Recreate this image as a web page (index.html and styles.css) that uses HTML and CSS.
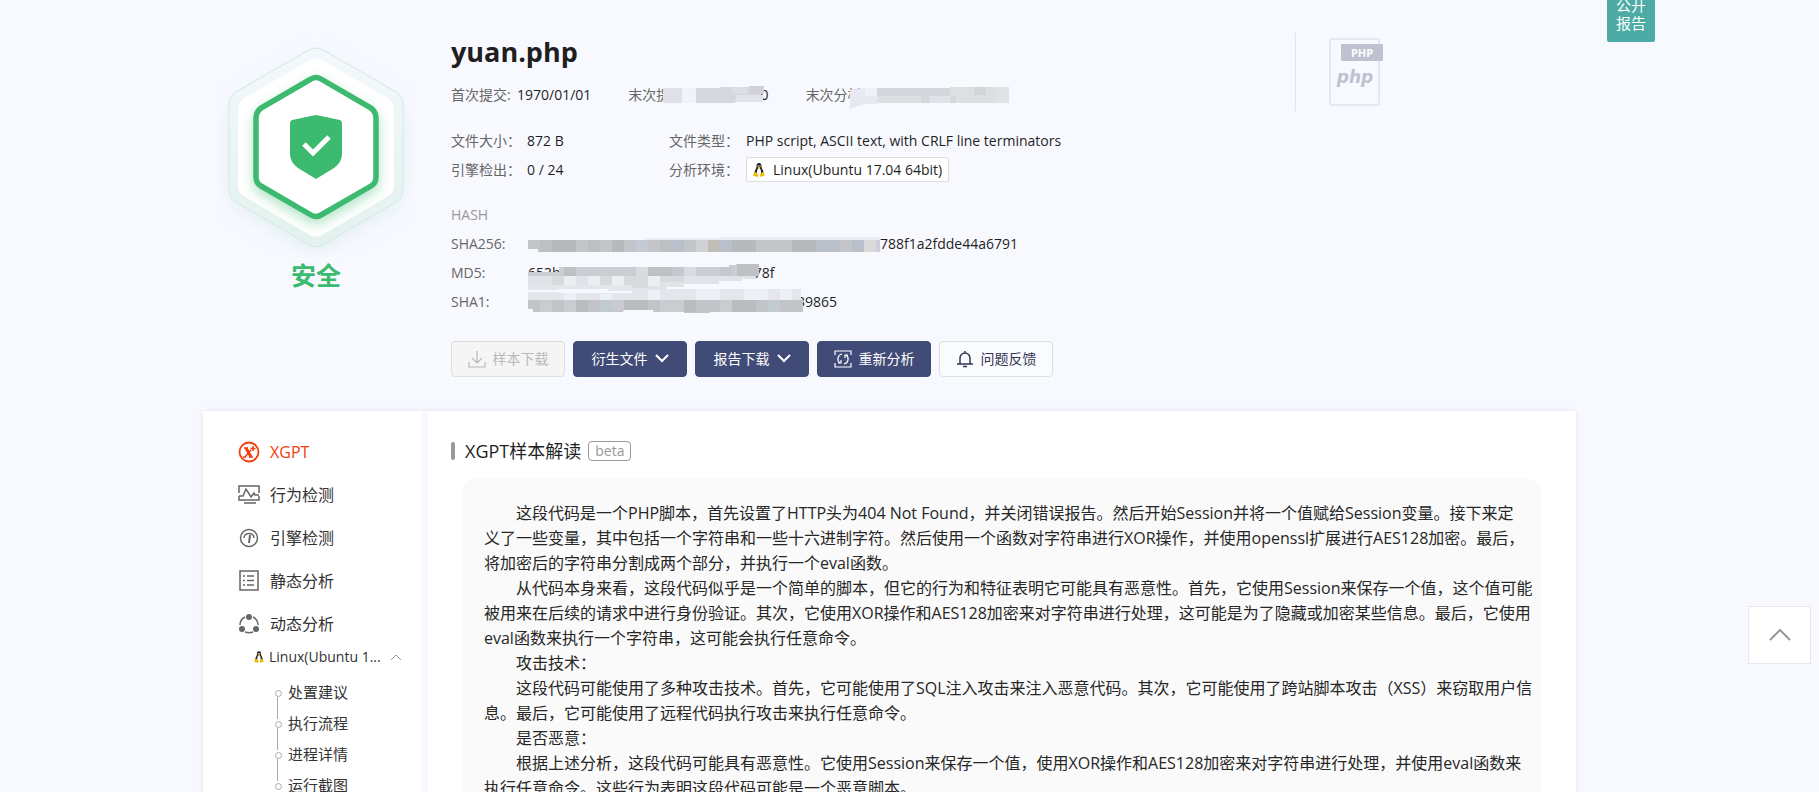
FILE: index.html
```
<!DOCTYPE html>
<html lang="zh-CN">
<head>
    <meta charset="UTF-8">
    <meta name="viewport" content="width=device-width, initial-scale=1.0">
    <title>yuan.php</title>
    <link rel="stylesheet" href="styles.css">
</head>
<body>

    <svg width="0" height="0" class="defs" aria-hidden="true">
        <symbol id="tux" viewBox="0 0 24 28">
            <path fill="#1c1c1c" d="M12 0c-4 0-5 3-5 6 0 4-1 5-3 9-1 3-1 6 0 8h16c1-2 1-5 0-8-2-4-3-5-3-9 0-3-1-6-5-6z"/>
            <path fill="#fff" d="M12 10c-3 0-3 3-4 6-1 4 0 9 4 9s5-5 4-9c-1-3-1-6-4-6z"/>
            <circle cx="10" cy="6" r="1.400" fill="#fff"/>
            <circle cx="14" cy="6" r="1.400" fill="#fff"/>
            <path fill="#f5b800" d="M9 9l3-2 3 2-3 3z"/>
            <path fill="#f5b800" d="M3 19l3-1 5 7c0 3-3 3-5 2l-5-1c-1-1 0-2 0-3 0-2 1-3 2-4zM21 19l-3-1-4 7c0 3 3 3 4 2l5-2c1-1 0-2-1-3 0-2-1-2-1-3z"/>
        </symbol>
    </svg>

    <div class="ribbon">公开<br>报告</div>

    <!-- File summary -->
    <header class="summary">
        <div class="verdict">
            <svg width="200" height="220" viewBox="0 0 200 220">
                <defs>
                    <linearGradient id="halo" x1="0" y1="0" x2="0" y2="1">
                        <stop offset="0" stop-color="#f4f8fd"/>
                        <stop offset="1" stop-color="#e3f2ee"/>
                    </linearGradient>
                    <filter id="outer" x="-30%" y="-30%" width="160%" height="160%">
                        <feDropShadow dx="0" dy="6" stdDeviation="9" flood-color="#9fcfcf" flood-opacity=".22"/>
                    </filter>
                    <filter id="glow" x="-30%" y="-30%" width="160%" height="160%">
                        <feDropShadow dx="0" dy="5" stdDeviation="6" flood-color="#3cba70" flood-opacity=".4"/>
                    </filter>
                </defs>
                <path filter="url(#outer)" fill="url(#halo)" stroke="#cfeae0" d="M93 13q7-4 14 0l73 42q7 5 7 13v84q0 9-7 13l-73 43q-7 4-14 0l-73-43q-7-4-7-13V68q0-8 7-13z"/>
                <path fill="#fff" d="M94 23q6-3 12 0l65 38q7 4 7 11v77q0 7-7 11l-65 38q-6 3-12 0l-65-38q-7-4-7-11V72q0-7 7-11z"/>
                <path filter="url(#glow)" fill="#fff" stroke="#3cba70" stroke-width="5.500" d="M95 42q5-3 10 0l50 29q5 4 5 10v59q0 6-5 9l-50 29q-5 3-10 0l-50-29q-5-3-5-9V81q0-6 5-10z"/>
                <path fill="#3cba70" d="M100 78l24 5q2 1 2 3v31q0 8-8 14l-18 11-18-11q-8-6-8-14V86q0-2 2-3z"/>
                <path fill="none" stroke="#fff" stroke-width="5" d="M88 107l9 9 16-16"/>
            </svg>
            <strong>安全</strong>
        </div>

        <div class="info">
            <h1>yuan.php</h1>

            <div class="dates">
                <div class="date"><span class="label">首次提交:</span><span>1970/01/01</span></div>
                <div class="date">
                    <span class="label">末次提交:</span><span>0000/00/00</span>
                    <svg class="mask" width="141" height="20">
                        <path fill="#e0e1e6" d="M35 3h33v15H35z"/>
                        <path fill="#f2f3fa" d="M54 3h15v15H54z"/>
                        <path fill="#d6d8dd" d="M68 3h24V2h41v15h-26v1H68z"/>
                        <path fill="#dadfe7" d="M104 2h15v7h-15z"/>
                        <path fill="#e1e3e9" d="M108 10h27v7h-27z"/>
                        <path fill="#cfd1d6" d="M121 1h15v8h-15z"/>
                    </svg>
                </div>
                <div class="date">
                    <span class="label">末次分析:</span><span>0000/00/00</span>
                    <svg class="mask" width="205" height="24">
                        <path fill="#e6e9f2" d="M44 5l14-2h14v16H58l-14 5z"/>
                        <path fill="#f0f1f8" d="M59 3h12v8H59z"/>
                        <path fill="#d4d7db" d="M71 3h132v15H71z"/>
                        <path fill="#dddfe3" d="M71 11h44v7H71zM144 2h46v9h-46zM150 11h53v7h-53z"/>
                        <path fill="#e1e2e7" d="M190 2h13v16h-13zM124 11h20v7h-20z"/>
                        <path fill="#d0d5d9" d="M168 2h12v8h-12z"/>
                    </svg>
                </div>
            </div>

            <div class="meta">
                <span class="label">文件大小：</span><span>872 B</span>
                <span class="label">文件类型：</span><span>PHP script, ASCII text, with CRLF line terminators</span>
                <span class="label">引擎检出：</span><span>0 / 24</span>
                <span class="label">分析环境：</span><span class="env"><svg width="12" height="14"><use href="#tux"/></svg>Linux(Ubuntu 17.04 64bit)</span>
            </div>

            <div class="hashes">
                <div class="hash-title">HASH</div>
                <div class="hash"><span class="label">SHA256:</span><span class="hidden-part long">cc</span><span>788f1a2fdde44a6791</span></div>
                <div class="hash"><span class="label">MD5:</span><span class="hidden-part short">653b</span><span>c78f</span></div>
                <div class="hash"><span class="label">SHA1:</span><span class="hidden-part medium"></span><span>39865</span></div>
                <svg class="hash-mask" width="353" height="78" shape-rendering="crispEdges">
                    <!-- SHA256 -->
                    <path fill="#ecedf3" d="M116 2h74V1h162v4H116z"/>
                    <path fill="#c4c5c9" d="M0 4h352v12H10v-3H0z"/>
                    <path fill="#b8b9bd" d="M24 4h24v12H24zM84 4h12v12H84zM204 4h24v12h-24zM264 4h24v12h-24z"/>
                    <path fill="#bebfc3" d="M12 4h12v12H12zM60 4h12v12H60zM132 4h12v12h-12z"/>
                    <path fill="#bac0c9" d="M144 4h12v12h-12zM192 4h12v12h-12zM288 4h24v12h-24zM324 4h12v12h-12z"/>
                    <path fill="#c5cbd4" d="M108 4h12v12h-12z"/>
                    <path fill="#cfd1d6" d="M168 4h12v12h-12z"/>
                    <path fill="#c0bdb8" d="M180 4h12v12h-12z"/>
                    <path fill="#dadad8" d="M336 4h12v12h-12z"/>
                    <path fill="#cdd0dc" d="M348 4h4v12h-4z"/>
                    <!-- MD5 -->
                    <path fill="#e2e3e8" d="M0 40h228v3h-14v2h-23v3h-35v3h-18v2H0z"/>
                    <path fill="#d9dade" d="M24 40h12v12H24zM72 40h12v12H72zM96 40h24v12H96zM132 40h24v6h-24z"/>
                    <path fill="#eceef4" d="M36 40h12v12H36zM60 40h12v12H60zM84 40h12v12H84zM120 40h12v10h-12z"/>
                    <path fill="#cccdd2" d="M0 36h31v-5h170v-2h7v-1h23v12H0z"/>
                    <path fill="#bfc0c4" d="M36 31h12v9H36zM120 31h24v9h-24zM209 28h22v12h-22z"/>
                    <path fill="#c4c9d1" d="M144 31h12v9h-12zM192 31h12v9h-12z"/>
                    <path fill="#dadbe0" d="M108 31h12v9h-12zM156 31h12v9h-12z"/>
                    <!-- SHA1 -->
                    <path fill="#e4e6eb" d="M0 49h104v3h20v1h149v11H0z"/>
                    <path fill="#f8f9ff" d="M0 54h30v-1h50v2h24v2H32v-1H0z"/>
                    <path fill="#edf0f6" d="M36 57h12v7H36zM72 58h12v6H72zM120 54h12v10h-12zM168 53h24v11h-24zM216 53h24v11h-24zM252 53h12v11h-12z"/>
                    <path fill="#c3c4c8" d="M0 64h275v12h-93v1h-26v-1h-31v-2h-30v2H5v-3H0z"/>
                    <path fill="#cbccd1" d="M12 64h12v12H12zM36 64h12v12H36zM84 64h12v11H84zM132 64h24v12h-24zM192 64h12v12h-12z"/>
                    <path fill="#bbbcc0" d="M48 64h12v12H48zM96 64h24v10H96zM156 64h12v12h-12zM204 64h24v12h-24z"/>
                    <path fill="#c2ccd0" d="M72 64h12v12H72zM240 64h12v12h-12z"/>
                </svg>
            </div>

            <div class="actions">
                <button class="btn disabled" disabled>
                    <svg width="18" height="18" fill="none" stroke="currentColor" stroke-width="1.200"><path d="M9 1v12M4 8l5 5 5-5M1 12v5h16v-5"/></svg>
                    样本下载
                </button>
                <button class="btn primary">
                    衍生文件
                    <svg width="14" height="10" fill="none" stroke="currentColor" stroke-width="2"><path d="M1 1l6 6 6-6"/></svg>
                </button>
                <button class="btn primary">
                    报告下载
                    <svg width="14" height="10" fill="none" stroke="currentColor" stroke-width="2"><path d="M1 1l6 6 6-6"/></svg>
                </button>
                <button class="btn primary">
                    <svg width="18" height="18" fill="none" stroke="currentColor" stroke-width="1.200"><path d="M1 5V1h16v4M1 13v4h16v-4M8 4a5 5 0 0 0-2 9M10 14a5 5 0 0 0 2-9M4 13h3v-3M14 5h-3v3"/></svg>
                    重新分析
                </button>
                <button class="btn">
                    <svg width="18" height="18" fill="none" stroke="currentColor" stroke-width="1.500"><path d="M4 14V8a5 5 0 0 1 10 0v6M1 14h16M7 16.500h4M9 1v2"/></svg>
                    问题反馈
                </button>
            </div>
        </div>

        <div class="filetype">
            <svg width="56" height="70" viewBox="0 0 56 70">
                <rect x="1" y="1" width="49" height="66" rx="2" fill="none" stroke="#e5e7f1" stroke-width="2"/>
                <rect x="12" y="6" width="42" height="17" rx="1" fill="#bec2d0"/>
                <text x="33" y="19" class="ext">PHP</text>
                <text x="26" y="45" class="logo">php</text>
            </svg>
        </div>
    </header>

    <div class="report">
        <!-- Side navigation -->
        <nav class="sidebar">
            <a href="#" class="active">
                <svg width="22" height="22" fill="none" stroke="currentColor" stroke-width="1.800">
                    <circle cx="11" cy="11" r="9.500"/>
                    <path stroke-width="3" d="M8 7l5 9"/>
                    <path stroke-width="1.500" d="M6 7h4M11 16h4M13 9l-6 7M5 16h3M15 5v5M12.500 7.500h5"/>
                </svg>
                XGPT
            </a>
            <a href="#">
                <svg width="22" height="22" fill="none" stroke="currentColor" stroke-width="1.500">
                    <path d="M1 9V2h20v7M1 12v4h20v-4M6 19h12M1 12h4l3-7 5 8 3-4 1 2h4"/>
                </svg>
                行为检测
            </a>
            <a href="#">
                <svg width="22" height="22" fill="none" stroke="currentColor" stroke-width="1.500">
                    <circle cx="11" cy="11" r="8.500"/>
                    <path d="M6 11c0-6 10-6 10 0"/>
                    <path stroke-width="2" d="M12 8l-1 8"/>
                </svg>
                引擎检测
            </a>
            <a href="#">
                <svg width="22" height="22" fill="none" stroke="currentColor" stroke-width="1.500">
                    <path d="M2 1h18v19H2zM9 6h7M9 10.500h7M9 15h7M5 6h2M5 10.500h2M5 15h2"/>
                </svg>
                静态分析
            </a>
            <a href="#">
                <svg width="22" height="22" fill="none" stroke="currentColor" stroke-width="1.500">
                    <path d="M7 4a9 9 0 0 0-5 8M15 4a9 9 0 0 1 5 8M7 19c3 1 5 1 8 0"/>
                    <g fill="currentColor" stroke="none"><circle cx="11" cy="4" r="3"/><circle cx="4" cy="16" r="3"/><circle cx="18" cy="16" r="3"/></g>
                </svg>
                动态分析
            </a>
            <a href="#" class="env-link">
                <svg width="10" height="12"><use href="#tux"/></svg>
                <span>Linux(Ubuntu 1...</span>
                <svg width="10" height="8" fill="none" stroke="#999"><path d="M0 7l5-5 5 5"/></svg>
            </a>
            <ul>
                <li><a href="#">处置建议</a></li>
                <li><a href="#">执行流程</a></li>
                <li><a href="#">进程详情</a></li>
                <li><a href="#">运行截图</a></li>
            </ul>
        </nav>

        <!-- XGPT result -->
        <main class="content">
            <h2>XGPT样本解读<span class="beta">beta</span></h2>
            <div class="analysis">
                <p>这段代码是一个PHP脚本，首先设置了HTTP头为404 Not Found，并关闭错误报告。然后开始Session并将一个值赋给Session变量。接下来定<br>义了一些变量，其中包括一个字符串和一些十六进制字符。然后使用一个函数对字符串进行XOR操作，并使用openssl扩展进行AES128加密。最后，<br>将加密后的字符串分割成两个部分，并执行一个eval函数。</p>
                <p>从代码本身来看，这段代码似乎是一个简单的脚本，但它的行为和特征表明它可能具有恶意性。首先，它使用Session来保存一个值，这个值可能被用来在后续的请求中进行身份验证。其次，它使用XOR操作和AES128加密来对字符串进行处理，这可能是为了隐藏或加密某些信息。最后，它使用eval函数来执行一个字符串，这可能会执行任意命令。</p>
                <p>攻击技术：</p>
                <p>这段代码可能使用了多种攻击技术。首先，它可能使用了SQL注入攻击来注入恶意代码。其次，它可能使用了跨站脚本攻击（XSS）来窃取用户信息。最后，它可能使用了远程代码执行攻击来执行任意命令。</p>
                <p>是否恶意：</p>
                <p>根据上述分析，这段代码可能具有恶意性。它使用Session来保存一个值，使用XOR操作和AES128加密来对字符串进行处理，并使用eval函数来执行任意命令。这些行为表明这段代码可能是一个恶意脚本。</p>
            </div>
        </main>
    </div>

    <button class="to-top" aria-label="返回顶部">
        <svg width="24" height="14" fill="none" stroke="#999" stroke-width="2"><path d="M2 12L12 2l10 10"/></svg>
    </button>

</body>
</html>
```
FILE: styles.css
```
* {
    box-sizing: border-box;
}

body {
    margin: 0;
    background-color: #f8f9ff;
    color: #1f1f1f;
    font-family: "Open Sans", "Noto Sans CJK SC", sans-serif;
    font-size: 14px;
    line-height: 20px;
}

a {
    color: inherit;
    text-decoration: none;
}

svg {
    flex: none;
}

.defs {
    position: absolute;
}

.ribbon {
    position: absolute;
    top: 0;
    right: 164px;
    width: 48px;
    height: 42px;
    border-radius: 0 0 2px 2px;
    background-color: #4caba4;
    color: #fff;
    font-size: 15px;
    line-height: 18px;
    text-align: center;
    display: flex;
    align-items: flex-end;
    justify-content: center;
    padding-bottom: 10px;
}

/* Summary */
.summary {
    display: flex;
    margin: 0 243px 0 203px;
    padding: 33px 0 34px;
}

.verdict {
    width: 248px;
    padding: 4px 35px 0 13px;
    display: flex;
    flex-direction: column;
    align-items: center;
}

.verdict strong {
    color: #3cba70;
    font-size: 25px;
    line-height: 36px;
}

.info {
    flex: 1;
}

h1 {
    margin: 0;
    font-size: 27px;
    line-height: 38px;
}

.label {
    color: #666;
}

.dates {
    display: flex;
    gap: 37px;
    margin-top: 14px;
}

.date {
    position: relative;
    display: flex;
}

.date .label {
    width: 66px;
}

.mask {
    position: absolute;
    top: 0;
    left: 0;
}

.meta {
    display: grid;
    grid-template-columns: 76px 142px 77px 1fr;
    gap: 4px 0;
    margin-top: 23px;
    line-height: 25px;
}

.env {
    justify-self: start;
    display: flex;
    align-items: center;
    gap: 8px;
    height: 25px;
    padding: 0 6px;
    border: 1px solid #dcdee2;
    border-radius: 2px;
    background-color: #fff;
    line-height: 23px;
}

.hashes {
    position: relative;
    display: flex;
    flex-direction: column;
    gap: 5px;
    margin-top: 20px;
    line-height: 25px;
}

.hash-title {
    color: #999;
}

.hash {
    display: flex;
    line-height: 24px;
}

.hash .label {
    width: 77px;
}

.hidden-part.long {
    width: 352px;
}

.hidden-part.short {
    width: 219px;
}

.hidden-part.medium {
    width: 269px;
}

.hash-mask {
    position: absolute;
    top: 34px;
    left: 77px;
}

.actions {
    display: flex;
    gap: 8px;
    margin-top: 27px;
}

.btn {
    display: flex;
    align-items: center;
    justify-content: center;
    gap: 7px;
    width: 114px;
    height: 36px;
    padding: 0;
    border: 1px solid #dcdee2;
    border-radius: 4px;
    background-color: #fafbff;
    color: #333652;
    font: inherit;
    cursor: pointer;
}

.btn.primary {
    border-color: #414b78;
    background-color: #414b78;
    color: #fff;
}

.btn.disabled {
    background-color: #f5f5f5;
    color: #b8b8b8;
    cursor: default;
}

.filetype {
    width: 281px;
    height: 78px;
    padding: 5px 33px;
    border-left: 1px solid #e3e4ea;
}

.ext {
    fill: #fff;
    font-size: 11px;
    font-weight: 700;
    text-anchor: middle;
}

.logo {
    fill: #bec2d0;
    font-family: "DejaVu Sans", sans-serif;
    font-size: 17px;
    font-style: italic;
    font-weight: 700;
    text-anchor: middle;
}

/* Report */
.report {
    display: flex;
    gap: 6px;
    margin: 0 243px 0 203px;
    box-shadow: 0 0 6px rgba(0, 0, 0, 0.08);
    background-color: #f8f9ff;
}

.sidebar {
    width: 219px;
    padding: 19px 0;
    background-color: #fff;
    color: #333;
    font-size: 16px;
}

.sidebar > a {
    display: flex;
    align-items: center;
    gap: 10px;
    height: 43px;
    padding-left: 35px;
}

.sidebar > a svg {
    color: #666;
}

.sidebar .active,
.sidebar .active svg {
    color: #f63b0c;
}

.sidebar .env-link {
    gap: 5px;
    height: 23px;
    padding-left: 51px;
    font-size: 14px;
}

.env-link span {
    width: 117px;
}

.sidebar ul {
    margin: 9px 0 0;
    padding: 0 0 0 72px;
    list-style: none;
    font-size: 15px;
    line-height: 31px;
}

.sidebar li {
    position: relative;
    padding-left: 13px;
}

.sidebar li::before {
    content: "";
    position: absolute;
    top: 13px;
    left: 0;
    width: 5px;
    height: 5px;
    border: 1px solid #aaa;
    border-radius: 50%;
}

.sidebar li:not(:last-child)::after {
    content: "";
    position: absolute;
    top: 20px;
    left: 2px;
    width: 1px;
    height: 22px;
    background-color: #aaa;
}

.content {
    flex: 1;
    padding: 28px 35px 40px 23px;
    background-color: #fff;
}

h2 {
    display: flex;
    align-items: center;
    margin: 0;
    font-size: 18px;
    font-weight: 400;
    line-height: 24px;
}

h2::before {
    content: "";
    width: 4px;
    height: 18px;
    margin-right: 10px;
    border-radius: 2px;
    background-color: #999;
}

.beta {
    margin-left: 7px;
    padding: 0 6px;
    border: 1px solid #999;
    border-radius: 4px;
    color: #999;
    font-size: 14px;
    line-height: 18px;
}

.analysis {
    margin: 16px 0 0 11px;
    padding: 22px 5px 21px 22px;
    border-radius: 12px;
    background-color: #fafafa;
    color: #262626;
    font-size: 16px;
    line-height: 25px;
}

.analysis p {
    margin: 0;
    text-indent: 2em;
}

.to-top {
    position: fixed;
    right: 8px;
    bottom: 128px;
    display: flex;
    align-items: center;
    justify-content: center;
    width: 63px;
    height: 58px;
    border: 1px solid #e8e8ec;
    background-color: #fff;
    cursor: pointer;
}
```
